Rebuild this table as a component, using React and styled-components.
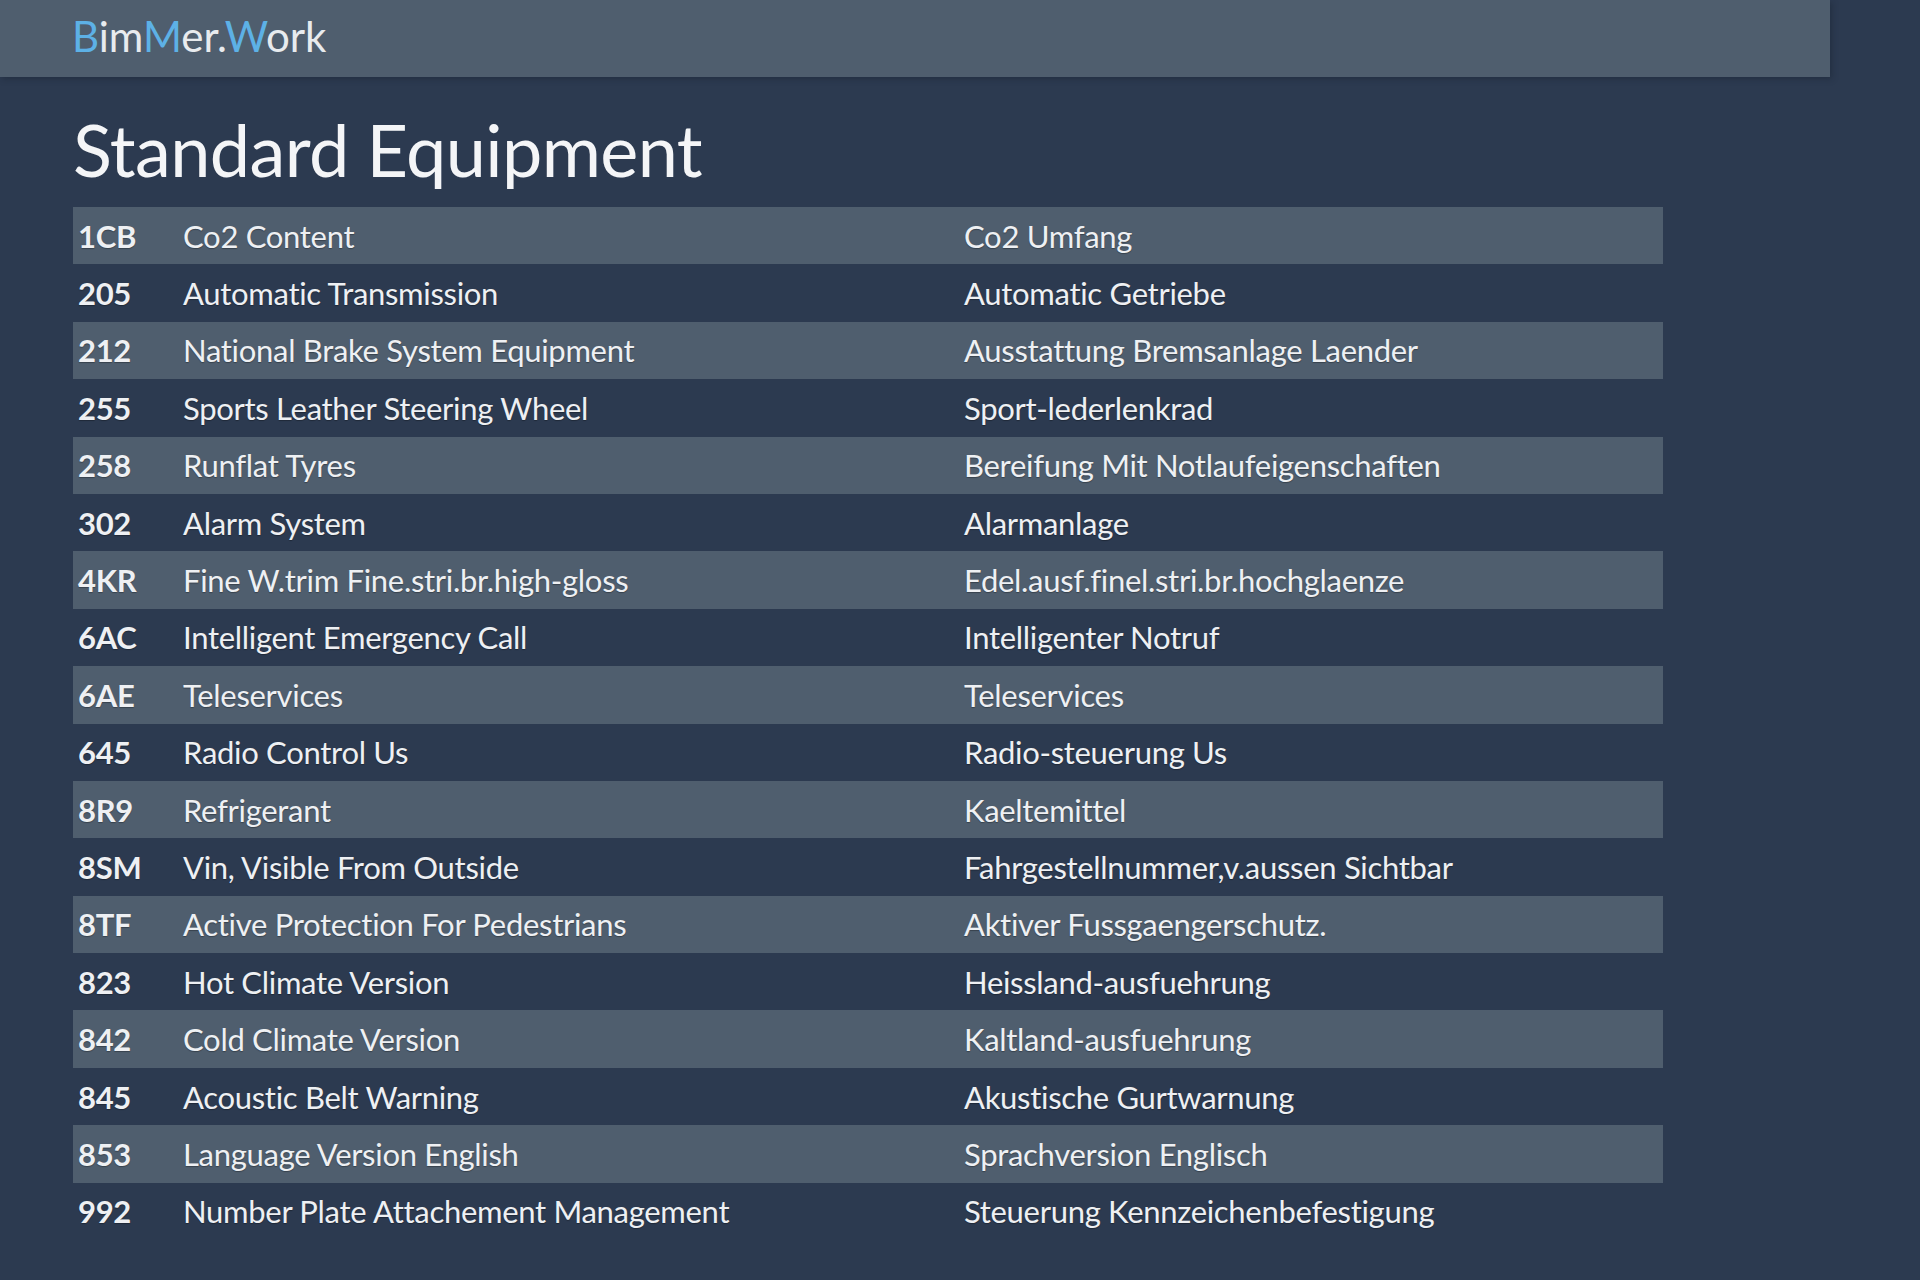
import React from "react";
import styled, { createGlobalStyle } from "styled-components";

const Global = createGlobalStyle`
  html, body { margin: 0; padding: 0; background: #2c3a50; }
  body { font-family: Lato, "Open Sans", sans-serif; color: #eef0f2; }
`;

const Page = styled.div`
  min-height: 1280px;
  background: #2c3a50;
`;

const Header = styled.header`
  width: 1830px;
  height: 77px;
  background: #4f5e6e;
  display: flex;
  align-items: center;
  padding: 0 0 6px 72px;
  box-sizing: border-box;
  box-shadow: 2px 2px 6px rgba(20, 30, 40, 0.35);
`;

const Logo = styled.div`
  font-size: 42px;
  color: #e8ebee;
  letter-spacing: 0;
`;

const Accent = styled.span`
  color: #5db1e6;
`;

const Main = styled.main`
  padding: 0 0 0 73px;
`;

const Title = styled.h1`
  margin: 0;
  padding-top: 34px;
  height: 130px;
  box-sizing: border-box;
  font-size: 72px;
  font-weight: 400;
  line-height: 76px;
  color: #f4f5f7;
  letter-spacing: -0.6px;
`;

const Table = styled.div`
  width: 1590px;
  display: flex;
  flex-direction: column;
`;

const Row = styled.div`
  display: grid;
  grid-template-columns: 110px 781px 1fr;
  align-items: center;
  height: 57.4px;
  background: ${(p) => (p.$striped ? "#4f5e6e" : "transparent")};
  font-size: 31px;
  letter-spacing: -0.3px;
  color: #eef0f3;
  text-shadow: 0 1px 1px rgba(0, 0, 0, 0.3);
`;

const Code = styled.div`
  padding-left: 5px;
  font-weight: 700;
`;

const Cell = styled.div`
  white-space: nowrap;
`;

const rows = [
  ["1CB", "Co2 Content", "Co2 Umfang"],
  ["205", "Automatic Transmission", "Automatic Getriebe"],
  ["212", "National Brake System Equipment", "Ausstattung Bremsanlage Laender"],
  ["255", "Sports Leather Steering Wheel", "Sport-lederlenkrad"],
  ["258", "Runflat Tyres", "Bereifung Mit Notlaufeigenschaften"],
  ["302", "Alarm System", "Alarmanlage"],
  ["4KR", "Fine W.trim Fine.stri.br.high-gloss", "Edel.ausf.finel.stri.br.hochglaenze"],
  ["6AC", "Intelligent Emergency Call", "Intelligenter Notruf"],
  ["6AE", "Teleservices", "Teleservices"],
  ["645", "Radio Control Us", "Radio-steuerung Us"],
  ["8R9", "Refrigerant", "Kaeltemittel"],
  ["8SM", "Vin, Visible From Outside", "Fahrgestellnummer,v.aussen Sichtbar"],
  ["8TF", "Active Protection For Pedestrians", "Aktiver Fussgaengerschutz."],
  ["823", "Hot Climate Version", "Heissland-ausfuehrung"],
  ["842", "Cold Climate Version", "Kaltland-ausfuehrung"],
  ["845", "Acoustic Belt Warning", "Akustische Gurtwarnung"],
  ["853", "Language Version English", "Sprachversion Englisch"],
  ["992", "Number Plate Attachement Management", "Steuerung Kennzeichenbefestigung"],
];

export default function App() {
  return (
    <Page>
      <Global />
      <Header>
        <Logo>
          <Accent>B</Accent>im<Accent>M</Accent>er.<Accent>W</Accent>ork
        </Logo>
      </Header>
      <Main>
        <Title>Standard Equipment</Title>
        <Table>
          {rows.map(([code, en, de], i) => (
            <Row key={code} $striped={i % 2 === 0}>
              <Code>{code}</Code>
              <Cell>{en}</Cell>
              <Cell>{de}</Cell>
            </Row>
          ))}
        </Table>
      </Main>
    </Page>
  );
}
